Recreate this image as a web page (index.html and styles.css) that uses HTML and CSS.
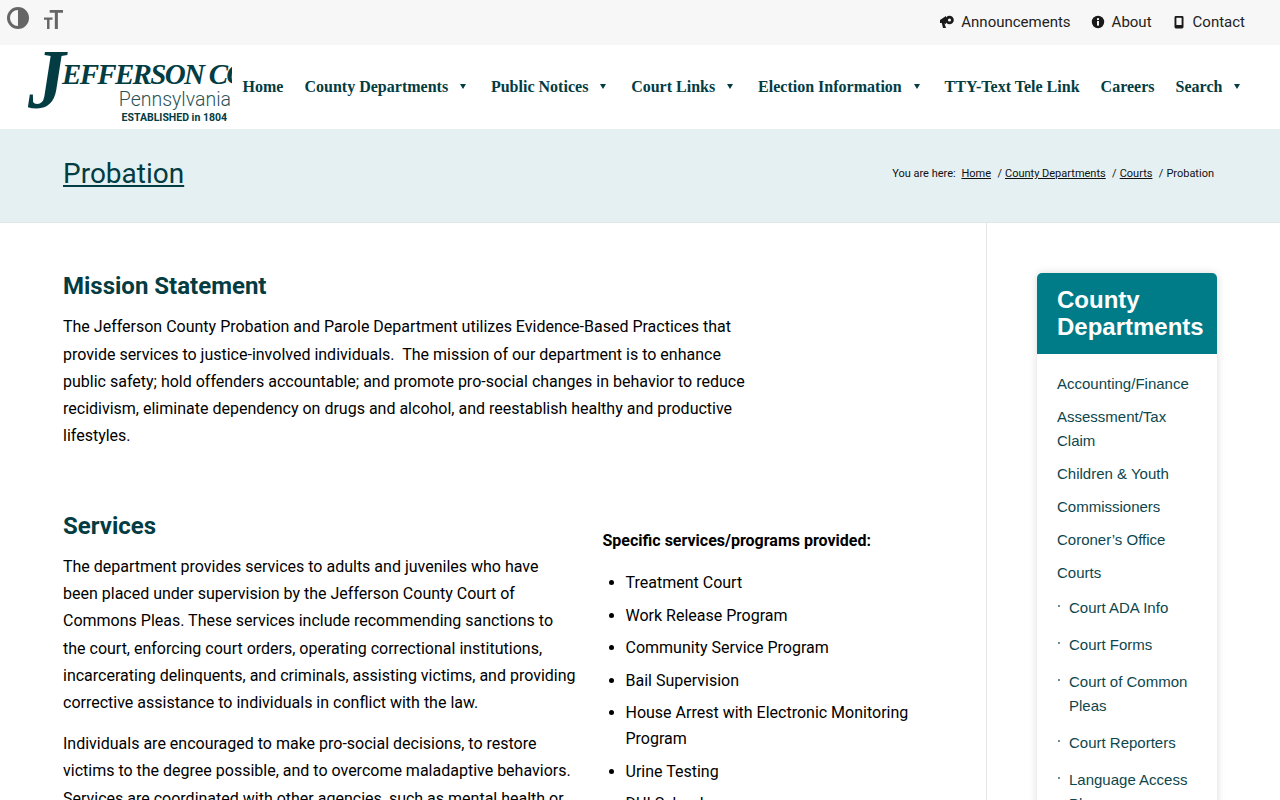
FILE: index.html
```html
<!DOCTYPE html>
<html>
<head>
  <title>Probation</title>
  <link rel="stylesheet" href="styles.css">
</head>
<body>
<div class="page">

  <!-- Top bar -->
  <div class="topbar">
    <div class="a11y">
      <svg class="a11y-contrast" width="24" height="24" viewBox="0 0 24 24"><circle cx="12" cy="12" r="9.5" fill="#f7f7f7" stroke="#666" stroke-width="3"/><path d="M12 2a10 10 0 0 1 0 20z" fill="#666"/></svg>
      <svg class="a11y-text" width="19" height="19" viewBox="0 0 20 20" fill="#666"><path d="M6 0h14v3h-5.4v17h-3.2V3H6z"/><path d="M0 8h9v2.2H5.8V20H3.2v-9.8H0z"/></svg>
    </div>
    <div class="toplinks">
      <a href="#"><svg width="14" height="14" viewBox="0 0 14 14" fill="#1a1a1a"><path d="M0 5 6 1v8L4.5 8.6 6 13H3L1.8 8H0z"/><circle cx="9.5" cy="5" r="4.3"/><circle cx="9.5" cy="5" r="1.6" fill="#f7f7f7"/></svg>Announcements</a>
      <a href="#"><svg width="14" height="14" viewBox="0 0 14 14"><circle cx="7" cy="7" r="6.2" fill="#1a1a1a"/><rect x="6" y="6" width="2" height="4.6" fill="#f7f7f7"/><rect x="6" y="3.2" width="2" height="1.8" fill="#f7f7f7"/></svg>About</a>
      <a href="#"><svg width="14" height="14" viewBox="0 0 14 14"><rect x="2.5" y="1" width="9" height="12.4" rx="1.4" fill="#1a1a1a"/><rect x="4.4" y="2.8" width="5.2" height="7.2" fill="#f7f7f7"/></svg>Contact</a>
    </div>
  </div>

  <!-- Logo and main menu -->
  <div class="header">
    <div class="logo">
      <span class="logo-j">J</span>
      <span class="logo-name">EFFERSON COUNTY</span>
      <span class="logo-state">Pennsylvania</span>
      <span class="logo-est">ESTABLISHED in 1804</span>
    </div>
    <ul class="menu">
      <li><a href="#">Home</a></li>
      <li class="has-sub"><a href="#">County Departments</a></li>
      <li class="has-sub"><a href="#">Public Notices</a></li>
      <li class="has-sub"><a href="#">Court Links</a></li>
      <li class="has-sub"><a href="#">Election Information</a></li>
      <li><a href="#">TTY-Text Tele Link</a></li>
      <li><a href="#">Careers</a></li>
      <li class="has-sub"><a href="#">Search</a></li>
    </ul>
  </div>

  <!-- Page title band -->
  <div class="title-band">
    <h1><a href="#">Probation</a></h1>
    <div class="crumbs">
      <span class="crumb-label">You are here:</span>
      <a href="#">Home</a>
      <span class="sep">/</span><a href="#">County Departments</a>
      <span class="sep">/</span><a href="#">Courts</a>
      <span class="sep">/</span><span>Probation</span>
    </div>
  </div>

  <div class="main">
    <!-- Main content -->
    <div class="content">
      <h2>Mission Statement</h2>
      <p class="mission">The Jefferson County Probation and Parole Department utilizes Evidence-Based Practices that provide services to justice-involved individuals.&nbsp; The mission of our department is to enhance public safety; hold offenders accountable; and promote pro-social changes in behavior to reduce recidivism, eliminate dependency on drugs and alcohol, and reestablish healthy and productive lifestyles.</p>

      <div class="columns">
        <div class="col-left">
          <h2>Services</h2>
          <p>The department provides services to adults and juveniles who have been placed under supervision by the Jefferson County Court of Commons Pleas. These services include recommending sanctions to the court, enforcing court orders, operating correctional institutions, incarcerating delinquents, and criminals, assisting victims, and providing corrective assistance to individuals in conflict with the law.</p>
          <p>Individuals are encouraged to make pro-social decisions, to restore victims to the degree possible, and to overcome maladaptive behaviors. Services are coordinated with other agencies, such as mental health or</p>
        </div>
        <div class="col-right">
          <p class="programs-title">Specific services/programs provided:</p>
          <ul class="programs">
            <li>Treatment Court</li>
            <li>Work Release Program</li>
            <li>Community Service Program</li>
            <li>Bail Supervision</li>
            <li>House Arrest with Electronic Monitoring Program</li>
            <li>Urine Testing</li>
            <li>DUI School</li>
          </ul>
        </div>
      </div>
    </div>

    <!-- Sidebar -->
    <div class="sidebar">
      <div class="side-card">
        <h3>County Departments</h3>
        <ul class="side-menu">
          <li><a href="#">Accounting/Finance</a></li>
          <li><a href="#">Assessment/Tax Claim</a></li>
          <li><a href="#">Children &amp; Youth</a></li>
          <li><a href="#">Commissioners</a></li>
          <li><a href="#">Coroner’s Office</a></li>
          <li><a href="#">Courts</a>
            <ul class="side-sub">
              <li><a href="#">Court ADA Info</a></li>
              <li><a href="#">Court Forms</a></li>
              <li><a href="#">Court of Common Pleas</a></li>
              <li><a href="#">Court Reporters</a></li>
              <li><a href="#">Language Access Plan</a></li>
            </ul>
          </li>
        </ul>
      </div>
    </div>
  </div>

</div>
</body>
</html>
```

FILE: styles.css
```css
/* Page frame */
body {
  margin: 0;
  font-family: Roboto, sans-serif;
  font-size: 16px;
  line-height: 27.2px;
  color: #000;
}

.page {
  height: 800px;
  overflow: hidden;
}

a {
  color: inherit;
}

/* Top bar */
.topbar {
  height: 45px;
  background-color: #f7f7f7;
  display: flex;
  justify-content: space-between;
  padding: 0 35px 0 6px;
}

.a11y {
  display: flex;
  align-items: flex-start;
  gap: 14px;
  padding-top: 6px;
}

.a11y-text {
  margin-top: 4px;
}

.toplinks {
  display: flex;
  align-items: center;
  gap: 20px;
}

.toplinks a {
  display: flex;
  align-items: center;
  gap: 7px;
  font-size: 15px;
  color: #222;
  text-decoration: none;
}

/* Header */
.header {
  height: 84px;
  display: flex;
  align-items: center;
  padding-left: 28px;
}

.logo {
  position: relative;
  width: 204px;
  height: 84px;
  overflow: hidden;
  color: #033c42;
  flex-shrink: 0;
}

.logo-j {
  position: absolute;
  left: 0;
  top: -7px;
  font: italic bold 84px/84px "Liberation Serif", serif;
  transform: scaleX(0.9);
  transform-origin: left top;
}

.logo-name {
  position: absolute;
  left: 34px;
  top: 14px;
  white-space: nowrap;
  font: italic bold 29px/30px "Liberation Serif", serif;
  letter-spacing: -1.7px;
}

.logo-state {
  position: absolute;
  right: 1px;
  top: 44px;
  font: 300 19.5px/22px Roboto, sans-serif;
  color: #2b5257;
}

.logo-est {
  position: absolute;
  right: 5px;
  top: 66px;
  font: bold 10.5px/14px Roboto, sans-serif;
  white-space: nowrap;
}

.menu {
  list-style: none;
  margin: 0 0 0 10.5px;
  padding: 0;
  display: flex;
  gap: 21px;
  font-family: "Liberation Serif", serif;
  font-weight: bold;
  font-size: 16px;
  letter-spacing: 0.01px;
  color: #033c42;
}

.menu a {
  text-decoration: none;
}

.has-sub::after {
  content: "";
  display: inline-block;
  margin: 0 3.75px 0 12px;
  vertical-align: 3px;
  border-left: 3.5px solid transparent;
  border-right: 3.5px solid transparent;
  border-top: 5px solid #033c42;
}

/* Title band */
.title-band {
  height: 93px;
  background-color: #e5f0f3;
  border-bottom: 1px solid #dfe6e8;
  display: flex;
  justify-content: space-between;
  padding: 0 66px 0 63px;
}

.title-band h1 {
  margin: 29px 0 0;
  font-size: 28px;
  line-height: 32px;
  font-weight: 400;
  color: #033c42;
}

.crumbs {
  margin-top: 35px;
  font-size: 11px;
  line-height: 20px;
  color: #111;
  white-space: nowrap;
}

.crumb-label {
  margin-right: 3px;
}

.sep {
  margin: 0 3px 0 3.67px;
}

/* Main area */
.main {
  display: flex;
}

.content {
  width: 987px;
  padding: 47px 0 0 63px;
  box-sizing: border-box;
  border-right: 1px solid #e6e6e6;
  height: 600px;
  flex-shrink: 0;
}

h2 {
  margin: 0 0 11.3px;
  font-size: 24px;
  line-height: 32px;
  font-weight: 700;
  color: #033c42;
}

p {
  margin: 0 0 14px;
}

.mission {
  width: 690px;
  margin-bottom: 0;
}

.columns {
  display: flex;
  gap: 25.5px;
  margin-top: 60.4px;
}

.col-left {
  width: 514px;
  flex-shrink: 0;
}

.col-right {
  width: 320px;
  padding-top: 17px;
}

.programs-title {
  font-weight: 700;
  margin: 0 0 16.2px;
}

.programs {
  margin: 0;
  padding-left: 23px;
  line-height: 25.6px;
}

.programs li {
  margin-bottom: 7px;
}

/* Sidebar */
.sidebar {
  padding: 50px 0 0 50px;
}

.side-card {
  width: 180px;
  box-shadow: 0 0 8px rgba(0, 0, 0, 0.15);
  border-radius: 5px 5px 0 0;
  font-family: "Liberation Sans", sans-serif;
}

.side-card h3 {
  margin: 0;
  padding: 13px 10px 14px 20px;
  background-color: #007c89;
  color: #fff;
  font-size: 24px;
  line-height: 27px;
  font-weight: 700;
  border-radius: 5px 5px 0 0;
}

.side-menu,
.side-sub {
  list-style: none;
  margin: 0;
  padding: 0;
}

.side-menu {
  padding: 18px 20px 0;
  font-size: 15px;
  line-height: 24px;
  color: #0d464d;
}

.side-menu a {
  text-decoration: none;
}

.side-menu > li {
  margin-bottom: 9px;
}

.side-sub {
  margin-top: 11px;
}

.side-sub li {
  position: relative;
  padding-left: 12px;
  margin-bottom: 13px;
}

.side-sub li::before {
  content: "";
  position: absolute;
  left: 1px;
  top: 9px;
  width: 2px;
  height: 2px;
  background-color: #6f8f93;
}
```
